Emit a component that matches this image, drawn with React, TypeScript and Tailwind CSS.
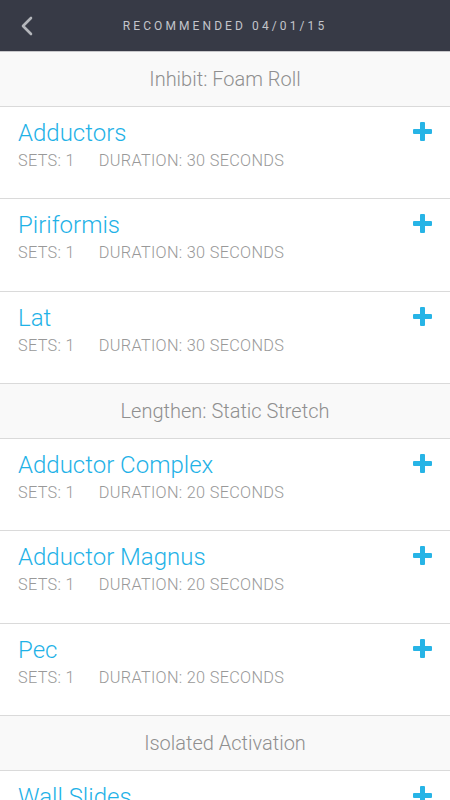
import React from "react";

type Item = { name: string; sets: number; duration: number };
type Section = { title: string; items: Item[] };

const sections: Section[] = [
  {
    title: "Inhibit: Foam Roll",
    items: [
      { name: "Adductors", sets: 1, duration: 30 },
      { name: "Piriformis", sets: 1, duration: 30 },
      { name: "Lat", sets: 1, duration: 30 },
    ],
  },
  {
    title: "Lengthen: Static Stretch",
    items: [
      { name: "Adductor Complex", sets: 1, duration: 20 },
      { name: "Adductor Magnus", sets: 1, duration: 20 },
      { name: "Pec", sets: 1, duration: 20 },
    ],
  },
  {
    title: "Isolated Activation",
    items: [
      { name: "Wall Slides", sets: 1, duration: 20 },
      { name: "Glute Bridge", sets: 1, duration: 20 },
    ],
  },
];

function Plus() {
  return (
    <svg width="19" height="19" viewBox="0 0 19 19" className="shrink-0">
      <rect x="7" y="0" width="5" height="19" rx="1" fill="#27b4e6" />
      <rect x="0" y="7" width="19" height="5" rx="1" fill="#27b4e6" />
    </svg>
  );
}

export default function App() {
  return (
    <div
      className="w-[450px] h-[800px] overflow-hidden bg-white font-light"
      style={{ fontFamily: "Roboto, 'Liberation Sans', sans-serif" }}
    >
      <div className="h-[51px] bg-[#373a46] flex items-center relative border-b border-[#c8c8cb] box-content">
        <svg
          width="14"
          height="20"
          viewBox="0 0 14 20"
          className="absolute left-[20px] top-[16px]"
        >
          <path
            d="M11 2 L3 10 L11 18"
            stroke="#b4b6bb"
            strokeWidth="2.6"
            fill="none"
            strokeLinecap="round"
            strokeLinejoin="round"
          />
        </svg>
        <div className="w-full text-center text-[12px] font-normal tracking-[3.1px] text-[#c3c5ca]">
          RECOMMENDED 04/01/15
        </div>
      </div>
      {sections.map((s) => (
        <div key={s.title}>
          <div className="h-[55px] bg-[#f9f9f9] border-b border-[#dadada] flex items-center justify-center text-[20px] text-[#8f8f8f]">
            {s.title}
          </div>
          {s.items.map((it) => (
            <div
              key={it.name}
              className="h-[92.33px] border-b border-[#dadada] bg-white flex items-start justify-between pl-[18px] pr-[18px] pt-[11px]"
            >
              <div>
                <div className="text-[24px] leading-[30px] text-[#1fb2e7]">
                  {it.name}
                </div>
                <div className="text-[16.3px] leading-[20px] tracking-[0.3px] text-[#999999] flex gap-[24px] mt-[3px]">
                  <span>SETS: {it.sets}</span>
                  <span>DURATION: {it.duration} SECONDS</span>
                </div>
              </div>
              <div className="pt-[4px]">
                <Plus />
              </div>
            </div>
          ))}
        </div>
      ))}
    </div>
  );
}
